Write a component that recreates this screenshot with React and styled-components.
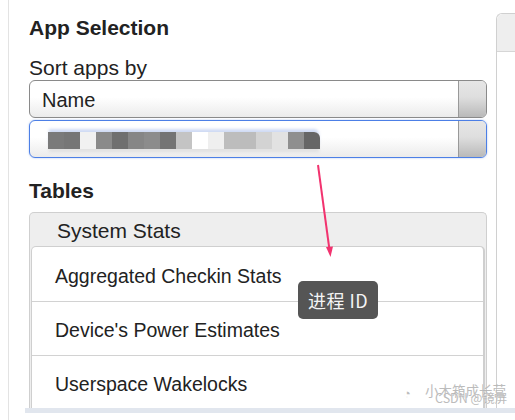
import React from "react";
import styled, { createGlobalStyle } from "styled-components";

const Global = createGlobalStyle`
  html, body { margin: 0; padding: 0; background: #fff; overflow: hidden; }
  body { font-family: "Liberation Sans", Helvetica, Arial, sans-serif; color: #222; }
  * { box-sizing: border-box; }
`;

const Page = styled.div`
  position: relative;
  height: 420px;
  margin-left: 8px;
  border-left: 1px solid #e3e3e3;
  display: grid;
  grid-template-rows: 408px 5px 1fr;
`;

const Main = styled.div`
  display: flex;
  align-items: stretch;
  min-height: 0;
`;

const LeftColumn = styled.div`
  width: 478px;
  padding-left: 20px;
  padding-top: 16px;
  display: flex;
  flex-direction: column;
  flex-shrink: 0;
`;

const Heading = styled.h3`
  margin: 0;
  font-size: 21px;
  line-height: 24px;
  font-weight: 700;
  color: #222;
  margin-top: ${(p) => p.$top || 0}px;
`;

const Label = styled.div`
  font-size: 21px;
  line-height: 24px;
  margin-top: 16px;
  color: #222;
`;

const Select = styled.div`
  height: 38px;
  flex-shrink: 0;
  display: flex;
  border-radius: 6px;
  border: ${(p) => (p.$focused ? "1.5px solid #4c7fe6" : "1px solid #8a8a8a")};
  box-shadow: ${(p) => (p.$focused ? "0 0 2px rgba(76,127,230,0.5)" : "none")};
  background: linear-gradient(#fff 0%, #fff 45%, #ebebeb 100%);
  overflow: hidden;
  margin-top: ${(p) => p.$top || 0}px;
`;

const SelectValue = styled.div`
  flex: 1;
  display: flex;
  align-items: center;
  padding: 2px 0 0 12px;
  font-size: 20px;
  color: #222;
`;

const SelectButton = styled.div`
  width: 28px;
  border-left: 1px solid #999;
  background: linear-gradient(#e6e6e6 0%, #dedede 45%, #b9b9b9 100%);
`;

const Blurred = styled.div`
  display: flex;
  margin-left: 6px;
  position: relative;
  box-shadow: 0 -4px 3px -1px rgba(170, 190, 235, 0.55), 0 4px 3px -1px rgba(200, 200, 200, 0.4);
  border-top-right-radius: 6px;
  overflow: hidden;
`;

const Pixel = styled.span`
  width: 16px;
  height: 17px;
  background: ${(p) => p.$c};
`;

const Panel = styled.div`
  margin-top: 9px;
  border: 1px solid #cfcfcf;
  border-bottom: none;
  border-radius: 5px 5px 0 0;
  background: #eeeeee;
  flex: 1;
  display: flex;
  flex-direction: column;
  min-height: 0;
`;

const PanelHeader = styled.div`
  height: 33px;
  flex-shrink: 0;
  padding: 3px 0 0 27px;
  display: flex;
  align-items: center;
  font-size: 21px;
  color: #222;
`;

const ListGroup = styled.div`
  margin: 0 1px 0 1px;
  flex: 1;
  background: #fff;
  border: 1px solid #cfcfcf;
  border-bottom: none;
  border-right: 2px solid #cfcfcf;
  border-radius: 5px 5px 0 0;
  display: flex;
  flex-direction: column;
  overflow: hidden;
`;

const ListItem = styled.div`
  height: 54px;
  flex-shrink: 0;
  display: flex;
  align-items: center;
  padding: 4px 0 0 23px;
  font-size: 19.5px;
  color: #222;
  border-top: ${(p) => (p.$first ? "none" : "1px solid #d2d2d2")};
`;

const RightPanel = styled.div`
  margin-left: 9px;
  margin-top: 13px;
  flex: 1;
  border: 1px solid #d0d0d0;
  border-right: none;
  border-bottom: none;
  border-top-left-radius: 6px;
  background: #fff;
`;

const RightHeader = styled.div`
  height: 38px;
  background: #eeeeee;
  border-bottom: 1px solid #d6d6d6;
  border-top-left-radius: 6px;
`;

const Band = styled.div`
  margin-left: 16px;
  background: #e1e6ee;
`;

const Arrow = styled.svg`
  position: absolute;
  left: 291px;
  top: 160px;
  overflow: visible;
`;

const Tooltip = styled.div`
  position: absolute;
  left: 289px;
  top: 281px;
  width: 80px;
  height: 38px;
  border-radius: 5px;
  background: #555555;
  color: #f4f4f4;
  font-family: "Noto Sans CJK SC", "Liberation Sans", sans-serif;
  font-size: 18px;
  display: flex;
  align-items: center;
  justify-content: center;
  letter-spacing: 0.5px;
`;

const Watermark = styled.div`
  position: absolute;
  left: 392px;
  top: 382px;
  width: 110px;
  height: 26px;
  color: #b5b5b5;
  font-family: "Noto Sans CJK SC", sans-serif;
  pointer-events: none;
`;

const WmLine = styled.span`
  position: absolute;
  left: ${(p) => p.$x}px;
  top: ${(p) => p.$y}px;
  font-size: ${(p) => p.$s}px;
  line-height: 1;
  white-space: nowrap;
  text-shadow: 0 0 1px #fff;
  opacity: 0.9;
`;

const pixels = [
  "#7a7a7a", "#767676", "#f1f1f1", "#8a8a8a", "#6f6f6f", "#868686", "#8c8c8c",
  "#747474", "#c4c4c4", "#ffffff", "#efefef", "#bdbdbd", "#bcbcbc", "#d3d3d3",
  "#e2e2e2", "#8f8f8f", "#666666",
];

export default function App() {
  return (
    <>
      <Global />
      <Page>
        <Main>
          <LeftColumn>
            <Heading>App Selection</Heading>
            <Label>Sort apps by</Label>
            <Select>
              <SelectValue>Name</SelectValue>
              <SelectButton />
            </Select>
            <Select $focused $top={2}>
              <SelectValue>
                <Blurred>
                  {pixels.map((c, i) => (
                    <Pixel key={i} $c={c} />
                  ))}
                </Blurred>
              </SelectValue>
              <SelectButton />
            </Select>
            <Heading $top={21}>Tables</Heading>
            <Panel>
              <PanelHeader>System Stats</PanelHeader>
              <ListGroup>
                <ListItem $first>Aggregated Checkin Stats</ListItem>
                <ListItem>Device's Power Estimates</ListItem>
                <ListItem>Userspace Wakelocks</ListItem>
              </ListGroup>
            </Panel>
          </LeftColumn>
          <RightPanel>
            <RightHeader />
          </RightPanel>
        </Main>
        <Band />
        <Arrow width="40" height="100">
          <line x1="18" y1="5" x2="29.5" y2="90" stroke="#f2336f" strokeWidth="2" />
          <path d="M26 87 L30.5 97 L33 86.5 Z" fill="#f2336f" />
        </Arrow>
        <Tooltip>进程 ID</Tooltip>
        <Watermark>
          <WmLine $x={2} $y={4} $s={13}>◔</WmLine>
          <WmLine $x={24} $y={2} $s={13.5}>小木箱成长营</WmLine>
          <WmLine $x={34} $y={10} $s={12.5}>CSDN @镜屏</WmLine>
        </Watermark>
      </Page>
    </>
  );
}
